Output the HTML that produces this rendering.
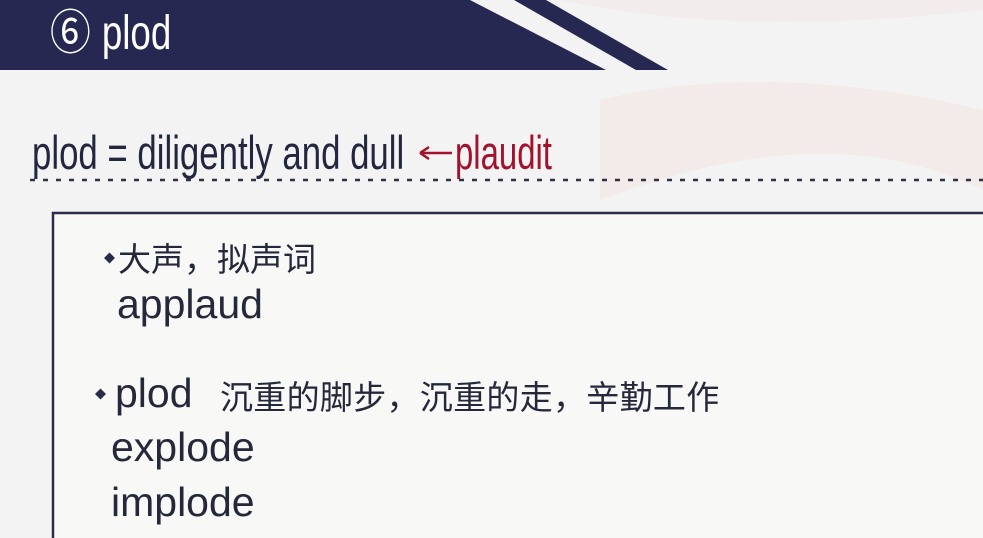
<!DOCTYPE html>
<html><head><meta charset="utf-8"><style>
html,body{margin:0;padding:0;overflow:hidden}
body{width:983px;height:538px;overflow:hidden;position:relative;background:#f4f3f3;font-family:"Liberation Sans","Noto Sans CJK SC",sans-serif}
.abs{position:absolute;white-space:nowrap}
.cond{transform-origin:0 0;transform:scaleX(0.74)}
.t{color:#25283a}
</style></head><body>
<svg class="abs" style="left:0;top:0" width="983" height="538">
<path d="M560 0 C700 30 850 25 983 10 L983 0Z" fill="#f3ecec"/>
<path d="M600 100 C720 70 860 80 983 110 L983 190 C880 140 760 140 600 200Z" fill="#f3ebea"/>
<polygon points="0,0 470,0 606,70 0,70" fill="#262851"/>
<polygon points="514,0 546,0 668,70 636,70" fill="#262851"/>
<line x1="30" y1="180" x2="983" y2="180" stroke="#2f3040" stroke-width="2.5" stroke-dasharray="5,8"/>
<rect x="53" y="213" width="960" height="340" fill="#f8f8f7" stroke="#2c2d48" stroke-width="2.5"/>
<path d="M104 258 l5.5 -5.5 l5.5 5.5 l-5.5 5.5z" fill="#2a2b48"/>
<path d="M95 394 l5.5 -5.5 l5.5 5.5 l-5.5 5.5z" fill="#2a2b48"/>
<path d="M420 153 H452 M420 153 l9 -6 M420 153 l9 6" stroke="#a3122c" stroke-width="2.5" fill="none"/>
</svg>
<div class="abs" style="left:50px;top:6px;font-size:48px;color:#fff;line-height:56px;transform-origin:0 0;transform:scaleX(0.85)">⑥ <span style="display:inline-block;transform-origin:0 0;transform:scaleX(0.9)">plod</span></div>
<div class="abs cond t" style="left:32px;top:127px;font-size:47px;line-height:52px;color:#23263f">plod = diligently and dull</div>
<div class="abs" style="left:455px;top:127px;font-size:47px;line-height:52px;color:#a3122c;transform-origin:0 0;transform:scaleX(0.7)">plaudit</div>
<div class="abs t" style="left:118px;top:237px;font-size:33px;line-height:40px;font-family:'Noto Sans CJK SC',sans-serif">大声，拟声词</div>
<div class="abs t" style="left:117px;top:281px;font-size:41px;line-height:46px">applaud</div>
<div class="abs t" style="left:115px;top:370px;font-size:41px;line-height:46px">plod<span style="position:absolute;left:105px;top:2px;font-family:'Noto Sans CJK SC',sans-serif;font-size:33px;letter-spacing:0.3px">沉重的脚步，沉重的走，辛勤工作</span></div>
<div class="abs t" style="left:111px;top:424px;font-size:41px;line-height:46px">explode</div>
<div class="abs t" style="left:111px;top:479px;font-size:41px;line-height:46px">implode</div>
</body></html>
